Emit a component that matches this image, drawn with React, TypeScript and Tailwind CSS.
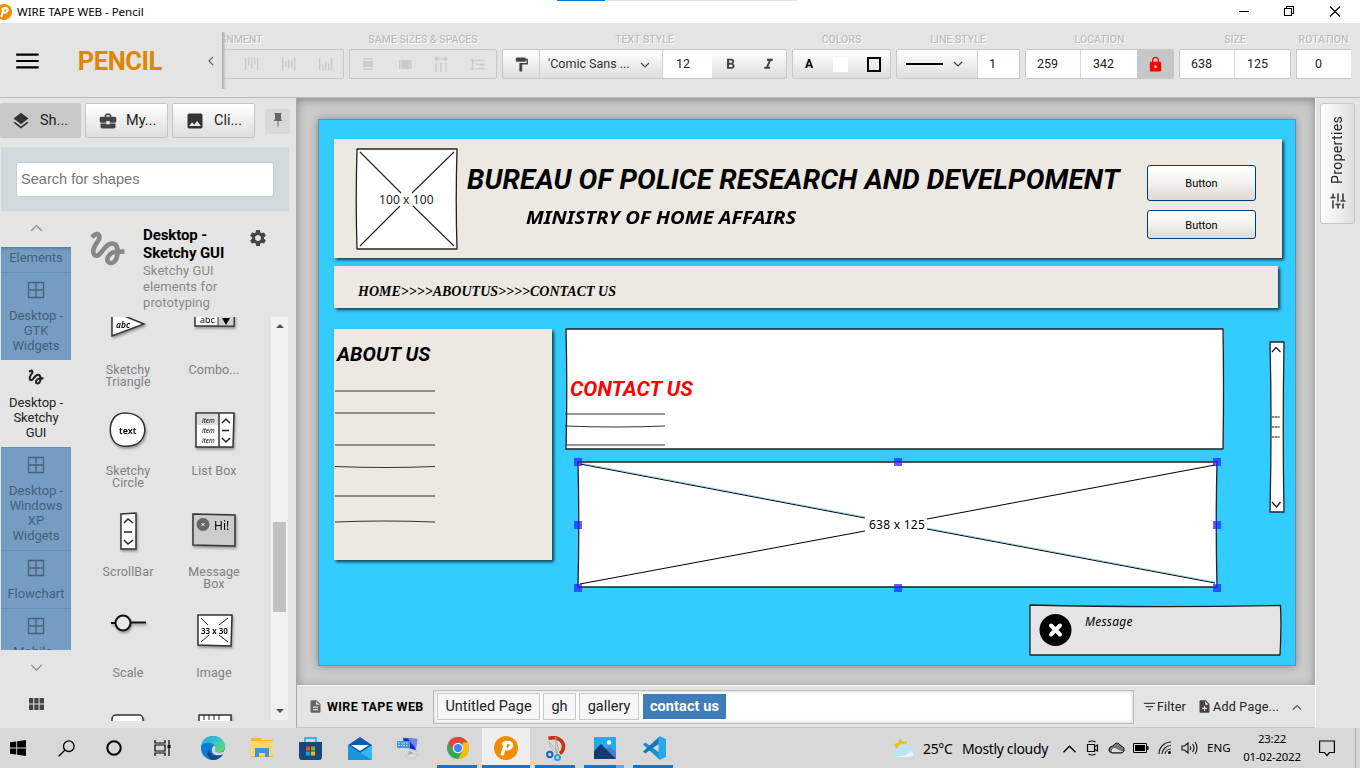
import React from "react";
import {
  MdLayers, MdBusinessCenter, MdImage, MdGesture, MdSettings, MdFormatPaint, MdFormatBold,
  MdFormatItalic, MdFormatLineSpacing, MdLock, MdDescription, MdNoteAdd, MdFilterList, MdTune,
} from "react-icons/md";

type Kids = { children?: React.ReactNode; className?: string };

function Chevron({ dir, className = "", size = 10, weight = 1.2 }: { dir: "up" | "down" | "left"; className?: string; size?: number; weight?: number }) {
  const d = dir === "up" ? "M1 7.5 5 3.5 9 7.5" : dir === "down" ? "M1 3 5 7 9 3" : "M7 1 3 5 7 9";
  return (
    <svg width={size} height={size} viewBox="0 0 10 10" className={className} fill="none" stroke="currentColor" strokeWidth={weight}>
      <path d={d} />
    </svg>
  );
}

function PencilLogo({ size }: { size: number }) {
  return (
    <svg width={size} height={size} viewBox="0 0 24 24" className="shrink-0">
      <circle cx="12" cy="12" r="12" fill="#f28c00" />
      <path d="M9.500 8c1-2.200 8-2.500 8 .8 0 3.200-3.400 4.500-6.400 3.700M11.400 8.500 8.400 18" fill="none" stroke="#fff" strokeWidth="3.400" strokeLinecap="round" strokeLinejoin="round" />
      <path d="M14.400 9.200 13.200 11.500" stroke="#f28c00" strokeWidth="1.300" strokeLinecap="round" />
    </svg>
  );
}

function TitleBar() {
  return (
    <div className="relative flex h-[23px] shrink-0 items-center bg-white">
      <div className="-ml-1 flex"><PencilLogo size={16} /></div>
      <span className="ml-[5px] whitespace-nowrap font-['Noto_Sans',sans-serif] text-[11.600px] tracking-[-0.050px] text-black">WIRE TAPE WEB - Pencil</span>
      <div className="absolute left-[557px] top-0 flex h-px w-[241px] bg-[#e3e3e3]"><div className="h-px w-12 bg-[#0078d7]" /></div>
      <svg width="110" height="20" viewBox="0 0 110 20" className="ml-auto mr-[14px]" fill="none" stroke="#000" strokeWidth="1.100">
        <path d="M3 9.500H13M48.500 6.500h7v7h-7zM50.500 6.500v-2h7v7h-2M94 4.500l10 10M104 4.500l-10 10" />
      </svg>
    </div>
  );
}

function Group({ label, className = "", box = "", children }: Kids & { label: string; box?: string }) {
  return (
    <div className={"flex shrink-0 flex-col items-center " + className}>
      <div className="h-[18px] whitespace-nowrap text-[10.500px] font-medium leading-[18px] text-[#bdbdbd] [text-shadow:1px_1px_0_#fff]">{label}</div>
      <div className={"flex h-[30px] w-full items-stretch overflow-hidden rounded-[2px] border border-[#c8c8c8] " + box}>{children}</div>
    </div>
  );
}

const grad = "bg-gradient-to-b from-white to-[#dedede]";

function Num({ children, className = "" }: Kids) {
  return <div className={"flex items-center bg-white text-[12.500px] text-[#222] " + className}>{children}</div>;
}

function BarsIcon({ mode }: { mode: "top" | "mid" | "bottom" }) {
  const bars = [13, 6, 9, 7, 13];
  return (
    <svg width="14" height="14" viewBox="0 0 14 14" fill="#cbcbcb">
      {[13, 8, 11, 7, 13].map((h, i) => {
        const v = mode === "top" ? h : bars[i];
        const y = mode === "top" ? 0.5 : mode === "bottom" ? 13.5 - v : 7 - v / 2;
        return <rect key={i} x={i * 3} y={y} width="1.400" height={v} />;
      })}
    </svg>
  );
}

function Toolbar() {
  return (
    <div className="flex h-[75px] shrink-0 items-stretch border-b border-[#bdbdbd] bg-[#e4e4e4]">
      <div className="relative z-10 mt-[9px] flex h-[57px] w-[222px] shrink-0 items-center bg-[#e4e4e4]">
        <svg width="23" height="18" viewBox="0 0 23 18" className="ml-4" stroke="#000" strokeWidth="2.200" strokeLinecap="round"><path d="M1 2.500h21M1 9h21M1 15.500h21" /></svg>
        <span className="ml-[39px] w-[129px] pt-px text-[25.500px] font-bold tracking-[-0.450px] text-[#df8600]">PENCIL</span>
        <Chevron dir="left" className="ml-auto mr-[6px] text-[#666]" />
        <div className="absolute left-full top-0 h-full w-[4px] bg-gradient-to-r from-[#aaaaaa] to-transparent" />
      </div>
      <div className="flex pt-[8px]">
        <Group label="ALIGNMENT" className="-ml-[12px] w-[134px] [&>div:first-child]:pr-[88px]" box="items-center">
          <div className="flex w-full items-center justify-end gap-[23px] pr-[10px]"><BarsIcon mode="top" /><BarsIcon mode="mid" /><BarsIcon mode="bottom" /></div>
        </Group>
        <Group label="SAME SIZES & SPACES" className="ml-[5px] w-[148px]">
          <div className="flex w-full items-center justify-between px-[10px]">
            <svg width="16" height="14" viewBox="0 0 16 14" fill="#cbcbcb"><path d="M3 1h10v1.500H3zM3 4h10v6H3zM3 11.500h10V13H3z" /></svg>
            <svg width="16" height="14" viewBox="0 0 16 14" fill="#cbcbcb"><path d="M2 3h1.500v9H2zM4.500 3h8v9h-8zM13 3h1.500v9H13z" /></svg>
            <svg width="14" height="16" viewBox="0 0 14 16" fill="none" stroke="#cbcbcb" strokeWidth="1.400"><path d="M2 7v9M7 7v9M12 7v9M1 3h12M3.500 1 1 3l2.500 2M10.500 1 13 3l-2.500 2" /></svg>
            <MdFormatLineSpacing size={17} color="#cbcbcb" />
          </div>
        </Group>
        <Group label="TEXT STYLE" className="ml-[5px] w-[285px]" box={grad}>
          <div className="flex w-[36px] items-center justify-center"><MdFormatPaint size={17} color="#444" /></div>
          <div className="flex w-[124px] items-center border-x border-[#d0d0d0] pl-[8px] pt-px text-[12.500px] text-[#333]">'Comic Sans ...<Chevron dir="down" className="ml-auto mr-[12px] text-[#444]" /></div>
          <Num className="w-[49px] pl-[13px]">12</Num>
          <div className="flex grow items-center justify-between pl-[10px] pr-[9px]"><MdFormatBold size={17} color="#444" /><MdFormatItalic size={17} color="#444" /></div>
        </Group>
        <Group label="COLORS" className="ml-[5px] w-[99px]" box={grad}>
          <div className="flex grow items-center justify-between pl-[12px] pr-[9px] text-[12px] font-bold text-black">A<span className="h-[15px] w-[15px] bg-white" /><span className="h-[15px] w-[14px] border-2 border-black" /></div>
        </Group>
        <Group label="LINE STYLE" className="ml-[5px] w-[124px]" box={grad}>
          <div className="flex w-[81px] items-center border-r border-[#d0d0d0] pl-[9px]"><span className="h-[2px] w-[37px] bg-black" /><Chevron dir="down" className="ml-[10px] text-[#444]" /></div>
          <Num className="grow pl-[11px]">1</Num>
        </Group>
        <Group label="LOCATION" className="ml-[5px] w-[149px]">
          <Num className="w-[55px] border-r border-[#d8d8d8] pl-[11px]">259</Num>
          <Num className="w-[56px] pl-[12px]">342</Num>
          <div className="flex grow items-center justify-center bg-[#c7c7c7]"><MdLock size={17} color="#ff0000" /></div>
        </Group>
        <Group label="SIZE" className="ml-[5px] w-[112px]">
          <Num className="w-[55px] border-r border-[#d8d8d8] pl-[11px]">638</Num>
          <Num className="grow pl-[12px]">125</Num>
        </Group>
        <Group label="ROTATION" className="ml-[5px] w-[55px]" box="rounded-r-none border-r-0"><Num className="w-full pl-[18px]">0</Num></Group>
      </div>
    </div>
  );
}

function Tab({ children, className = "" }: Kids) {
  return <div className={"flex h-[35px] items-center rounded-[2px] text-[14.500px] text-[#222] " + className}>{children}</div>;
}

function WindowIcon() {
  return (
    <svg width="18" height="18" viewBox="0 0 18 18" fill="none" stroke="#47617c" strokeWidth="1.300"><path d="M1.500 1.500h15v15h-15zM9 1.500v15M1.500 9h15" /></svg>
  );
}

function Category({ lines, active = false }: { lines: string[]; active?: boolean }) {
  return (
    <div className={"flex shrink-0 flex-col items-center px-0 pb-[7px] pt-[8px] text-[13px] leading-[15px] tracking-[-0.050px] " + (active ? "bg-[#e4e4e4] text-[#222]" : "border-t border-[#6790b5] text-[#435f7c]")}>
      {active ? <MdGesture size={20} className="-my-px" /> : <WindowIcon />}
      <div className="mt-[9px] text-center">{lines.map((l) => <div key={l} className="whitespace-nowrap">{l}</div>)}</div>
    </div>
  );
}

const comic = "'Noto Sans', sans-serif";
const sk = { fill: "#fff", stroke: "#333", strokeWidth: 1.5 };

function Thumb({ kind }: { kind: string }) {
  return (
    <svg width="50" height="42" viewBox="0 0 50 42" className="drop-shadow-[1px_2px_1px_#999]" fontFamily={comic}>
      {kind === "triangle" && <g><path d="M9 2 41 15 9 27z" {...sk} /><text x="13" y="19" fontSize="8.500" fontStyle="italic" fontWeight="600">abc</text></g>}
      {kind === "combo" && <g><rect x="6" y="2" width="39" height="15" {...sk} /><path d="M29 2h16v15H29z" fill="#d0d0d0" stroke="#333" /><path d="m33 9 8 0-4 7z" /><text x="11" y="13.500" fontSize="9">abc</text></g>}
      {kind === "circle" && <g><path d="M15 4.500C21 1.500 32 3 38 9c6 8 5 19-4 25-9 4-20 3-24-4C5 21 7 9 15 4.500z" {...sk} /><text x="16" y="24" fontSize="9" fontWeight="600">text</text></g>}
      {kind === "list" && <g><path d="m7 3 38 0-1 34-37 0z" {...sk} /><path d="M8 4h22v11H8z" fill="#ddd" /><path d="M30 3v34" stroke="#333" strokeWidth="1.500" /><g fontSize="6.500" fontStyle="italic"><text x="13" y="12.500">item</text><text x="13" y="22.500">item</text><text x="13" y="32.500">item</text></g><path d="m33 13 4-4 4 4M33 20.500h7M33 28l4 4 4-4" fill="none" stroke="#222" strokeWidth="1.500" /></g>}
      {kind === "scroll" && <g><path d="m18 3 15-1 0 36-15 0z" {...sk} /><path d="m21 12 4-4 5 4M21 21h8M21 29l4 4 5-4" fill="none" stroke="#222" strokeWidth="1.400" /></g>}
      {kind === "message" && <g><path d="m4 3 42 1 0 31-42-1z" fill="#ccc" stroke="#333" strokeWidth="1.500" /><circle cx="14" cy="13.500" r="6.500" fill="#666" /><path d="m12.500 12 3 3m0-3-3 3" stroke="#fff" /><text x="25" y="19" fontSize="12">Hi!</text></g>}
      {kind === "scale" && <g fill="none" stroke="#111" strokeWidth="2"><path d="M8 11h5M28 10.500h15" /><circle cx="20" cy="11" r="7.500" fill="#e9e9e9" /></g>}
      {kind === "image" && <g><path d="m9 3 34 0-1 31-33-1z" {...sk} /><path d="m12 6 7 7m20-7-9 7M12 30l8-7m19 7-9-7" stroke="#222" /><text x="12" y="21.500" fontSize="8" fontWeight="600">33 x 30</text></g>}
      {kind === "round" && <rect x="9" y="2" width="31" height="30" rx="4" {...sk} />}
      {kind === "calendar" && <g><rect x="10" y="2" width="32" height="30" {...sk} /><path d="M15 2v5m5-5v5m5-5v5m5-5v5" stroke="#222" /></g>}
    </svg>
  );
}

function Shape({ kind, lines }: { kind: string; lines: string[] }) {
  return (
    <div className="flex h-[101px] w-[86px] flex-col items-center">
      <Thumb kind={kind} />
      <div className="mt-[13px] whitespace-nowrap text-center text-[12.500px] leading-[12px] tracking-[0.100px] text-[#808080]">{lines.map((l) => <div key={l}>{l}</div>)}</div>
    </div>
  );
}

function Sidebar() {
  return (
    <div className="flex w-[297px] shrink-0 flex-col border-r border-[#aaa] bg-[#e4e4e4]">
      <div className="flex pt-[5px]">
        <Tab className="w-[81px] bg-[#c8c8c8] pl-[11px]"><MdLayers size={20} color="#333" /><span className="ml-[9px] pt-px">Sh...</span></Tab>
        <Tab className={"ml-1 w-[83px] border border-[#c5c5c5] pl-[12px] " + grad}><MdBusinessCenter size={20} color="#444" /><span className="ml-[8px] pt-px">My...</span></Tab>
        <Tab className={"ml-1 w-[83px] border border-[#c5c5c5] pl-[12px] " + grad}><MdImage size={20} color="#333" /><span className="ml-[9px] pt-px">Cli...</span></Tab>
        <div className="ml-[10px] mt-[6px] flex h-[25px] w-[25px] items-center justify-center rounded-[2px] bg-[#d8d8d8]">
          <svg width="10" height="14" viewBox="0 0 10 14" fill="#666" className="-mt-[3px]"><path d="M1.500 0h7v1H8v5l1.500 2H5.500v5.500h-1V8h-4L2 6V1h-.5z" /></svg>
        </div>
      </div>
      <div className="ml-px mt-[9px] flex h-[64px] w-[288px] items-center bg-[#d1d9dc] pl-[15px]">
        <div className="flex h-[35px] w-[258px] items-center rounded-[3px] border border-[#c6cccf] bg-white pl-[4px] pt-px font-['Liberation_Sans',sans-serif] text-[14.600px] text-[#757575]">Search for shapes</div>
      </div>
      <div className="flex min-h-0 grow">
        <div className="flex w-[72px] shrink-0 flex-col items-center">
          <div className="flex h-[36px] w-full items-center justify-center"><Chevron dir="up" size={13} weight={1} className="-mt-[3px] text-[#888]" /></div>
          <div className="ml-px flex h-[403px] w-[70px] flex-col self-start overflow-hidden bg-[#759dc2] shadow-[inset_0_4px_4px_-3px_#4c6f92]">
            <div className="h-[25px] shrink-0 pt-[3px] text-center text-[13px] leading-[15px] tracking-[-0.050px] text-[#435f7c]">Elements</div>
            <Category lines={["Desktop -", "GTK", "Widgets"]} />
            <Category active lines={["Desktop -", "Sketchy", "GUI"]} />
            <Category lines={["Desktop -", "Windows", "XP", "Widgets"]} />
            <Category lines={["Flowchart"]} />
            <Category lines={["Mobile -"]} />
          </div>
          <div className="flex h-[34px] items-center"><Chevron dir="down" size={13} weight={1} className="text-[#888]" /></div>
          <svg width="15" height="12" viewBox="0 0 15 12" className="ml-px mt-[14px]" fill="#444"><path d="M0 0h4.300v5.500H0zM5.300 0h4.300v5.500H5.300zM10.600 0H15v5.500h-4.400zM0 6.500h4.300V12H0zM5.300 6.500h4.300V12H5.300zM10.600 6.500H15V12h-4.400z" /></svg>
        </div>
        <div className="flex w-[217px] shrink-0 flex-col">
          <div className="flex h-[106px] shrink-0 items-start pl-[13px]">
            <MdGesture size={45} color="#888" className="mt-[15px]" />
            <div className="ml-[13px] mt-[15px] w-[100px] whitespace-nowrap text-[#888]">
              <div className="text-[15px] font-bold leading-[18px] tracking-[-0.100px] text-black">Desktop -<br />Sketchy GUI</div>
              <div className="mt-px text-[13px] leading-[16px] tracking-[0.100px]">Sketchy GUI<br />elements for<br />prototyping</div>
            </div>
            <MdSettings size={20} color="#444" className="ml-[5px] mt-[17px]" />
          </div>
          <div className="flex h-[404px]">
            <div className="flex w-[199px] justify-start overflow-hidden pl-[13px]">
              <div className="-mt-[8px] grid h-[520px] grid-cols-[86px_86px] content-start">
                <Shape kind="triangle" lines={["Sketchy", "Triangle"]} />
                <Shape kind="combo" lines={["Combo..."]} />
                <Shape kind="circle" lines={["Sketchy", "Circle"]} />
                <Shape kind="list" lines={["List Box"]} />
                <Shape kind="scroll" lines={["ScrollBar"]} />
                <Shape kind="message" lines={["Message", "Box"]} />
                <Shape kind="scale" lines={["Scale"]} />
                <Shape kind="image" lines={["Image"]} />
                <Shape kind="round" lines={[]} />
                <Shape kind="calendar" lines={[]} />
              </div>
            </div>
            <div className="flex h-[403px] w-[17px] flex-col items-center justify-between bg-[#f1f1f1]">
              <svg width="8" height="18" viewBox="0 0 8 18" fill="#505050"><path d="m0 11 4-4 4 4z" /></svg>
              <div className="mt-[187px] h-[90px] w-[13px] bg-[#c1c1c1]" />
              <svg width="8" height="18" viewBox="0 0 8 18" fill="#505050" className="mt-auto"><path d="m0 7 4 4 4-4z" /></svg>
            </div>
          </div>
        </div>
      </div>
    </div>
  );
}

const handles = [[578, 462], [898, 462], [1217, 462], [578, 525], [1217, 525], [578, 588], [898, 588], [1217, 588]];
const panelShadow = "bg-[#ece9e2] shadow-[2px_2px_3px_rgba(0,0,0,0.700)]";

function Board() {
  return (
    <div className="absolute left-[21px] top-[21px] h-[547px] w-[978px] whitespace-nowrap border border-[#628fb3] bg-[#33ccff] shadow-[0_0_8px_#888]">
      <div className={"absolute left-[15px] top-[19px] h-[119px] w-[948px] " + panelShadow} />
      <div className={"absolute left-[15px] top-[146px] h-[42px] w-[944px] " + panelShadow} />
      <div className={"absolute left-[15px] top-[209px] h-[231px] w-[218px] " + panelShadow} />
      <svg className="absolute left-0 top-0" width="976" height="545" viewBox="319 120 976 545" fill="#fff" stroke="#222" strokeWidth="1.300" strokeLinejoin="round">
        <path d="M357 149H457Q455.500 200 457 249H357Q355.500 200 357 149Z" />
        <path d="m360 152 41 41m53-41-42 41M360 246l40-40m54 40-41-40" strokeWidth="1.100" />
        <path d="M566 329H1223Q1224 390 1223 449H566Q567.500 390 566 329Z" />
        <path d="M578 462H1217Q1215.500 525 1217 587Q900 586 578 587Q579.500 525 578 462Z" />
        <path d="m580 464 285 54M927 529l288 54M580 584 865 531M927 519l288-54" strokeWidth="1" stroke="#000" />
        <path d="m580 463 285 54M927 528l288 54" stroke="#21abd5" strokeWidth=".5" />
        <path d="M1270 342h14q-1.500 90 0 170h-14q2-90 0-170z" />
        <path d="m1272 352 4-4.500 4.500 4.500M1272 502l4.500 5 4-5" fill="none" />
        <path d="M1272 417h8M1272 427h8M1272 437h8" stroke="#666" strokeWidth="1.500" strokeDasharray="2.300 .4" />
        <path d="M1030 605Q1150 608 1280.500 605.500Q1281.500 630 1280 655H1030Z" fill="#e4e4e4" />
        <circle cx="1055.500" cy="630" r="16" fill="#000" stroke="none" />
        <path d="m1051 625.500 9 9m0-9-9 9" stroke="#fff" strokeWidth="4" strokeLinecap="round" />
        <g fill="none" stroke="#333" strokeWidth="1.200">
          <path d="M335 391h100M335 413h100M335 445h100M335 466.500Q385 468.500 435 466.500M335 496h100M335 522Q385 520 435 522" />
          <path d="M565 414h100M565 426Q615 428 665 426M565 445h100" />
        </g>
        <g fill="#1f1fff" fillOpacity=".7" stroke="none">
          {handles.map(([x, y]) => <rect key={x + "-" + y} x={x - 4} y={y - 4} width="8" height="8" />)}
        </g>
      </svg>
      <div className="absolute left-[60px] top-[71px] font-['Noto_Sans',sans-serif] text-[12px] leading-[18px] tracking-[0.100px] text-[#222]">100 x 100</div>
      <div className="absolute left-[148px] top-[42px] text-[28px] font-bold italic leading-[36px] tracking-[0.120px]">BUREAU OF POLICE RESEARCH AND DEVELPOMENT</div>
      <div className="absolute left-[207px] top-[86px] origin-left scale-x-[1.122] font-['Noto_Sans',sans-serif] text-[18px] font-bold italic leading-[22px]">MINISTRY OF HOME AFFAIRS</div>
      <div className="absolute left-[39px] top-[163px] font-['Liberation_Serif',serif] text-[14px] font-bold italic leading-[18px]">HOME&gt;&gt;&gt;&gt;ABOUTUS&gt;&gt;&gt;&gt;CONTACT US</div>
      <div className="absolute left-[18px] top-[222px] text-[20px] font-bold italic leading-[24px] tracking-[0.080px]">ABOUT US</div>
      <div className="absolute left-[251px] top-[257px] text-[21px] font-bold italic leading-[24px] text-[#ff0000]">CONTACT US</div>
      <div className="absolute left-[550px] top-[396px] font-['Noto_Sans',sans-serif] text-[12px] leading-[18px] tracking-[0.250px]">638 x 125</div>
      <div className="absolute left-[766px] top-[493px] font-['Noto_Sans',sans-serif] text-[12px] italic leading-[18px] tracking-[0.200px]">Message</div>
      <div className="absolute left-[828px] top-[45px] flex h-[36px] w-[109px] items-center justify-center rounded-[3px] border border-[#003c74] bg-gradient-to-b from-white via-[#f2f1ed] to-[#dedad1] pt-[3px] text-[11px]">Button</div>
      <div className="absolute left-[828px] top-[90px] flex h-[29px] w-[109px] items-center justify-center rounded-[3px] border border-[#003c74] bg-gradient-to-b from-white via-[#f2f1ed] to-[#dedad1] pt-[3px] text-[11px]">Button</div>
    </div>
  );
}

function PageTab({ children, className = "" }: Kids) {
  return <div className={"flex h-[27px] items-center justify-center border border-[#c8c8c8] bg-[#f6f6f6] text-[14.500px] text-[#222] " + className}>{children}</div>;
}

function Workspace() {
  return (
    <div className="flex w-[1018px] shrink-0 flex-col">
      <div className="relative h-[587px] overflow-hidden bg-[#cbcbcb] shadow-[inset_0_2px_10px_#888]"><Board /></div>
      <div className="flex h-[43px] items-center border-b border-t border-b-[#c8c8c8] border-t-[#f3f3f3] bg-[#e4e4e4]">
        <MdDescription size={15} color="#666" className="ml-[11px]" />
        <span className="ml-[4px] w-[106px] shrink-0 whitespace-nowrap pt-px text-[12.500px] font-bold tracking-[0.350px] text-black">WIRE TAPE WEB</span>
        <div className="flex h-[34px] w-[701px] shrink-0 items-center gap-[3px] border border-[#bbb] bg-white pl-[3px] shadow-[inset_0_0_4px_#ccc]">
          <PageTab className="w-[103px]">Untitled Page</PageTab>
          <PageTab className="w-[33px]">gh</PageTab>
          <PageTab className="w-[60px]">gallery</PageTab>
          <div className="ml-px flex h-[25px] w-[83px] items-center justify-center bg-[#3f7db7] text-[14.500px] font-bold tracking-[0.100px] text-white">contact us</div>
        </div>
        <MdFilterList size={15} color="#444" className="ml-[8px]" />
        <span className="w-[40px] pt-px text-[12.500px] tracking-[0.150px] text-[#222]">Filter</span>
        <MdNoteAdd size={15} color="#444" />
        <span className="w-[80px] whitespace-nowrap pl-px pt-px text-[12.500px] tracking-[0.250px] text-[#222]">Add Page...</span>
        <Chevron dir="up" className="text-[#555]" />
      </div>
    </div>
  );
}

function RightPanel() {
  return (
    <div className="grow border-l border-l-[#f5f5f5] bg-[#e4e4e4] pl-[4px] pt-[5px]">
      <div className="flex h-[121px] w-[35px] flex-col items-center justify-end rounded-[3px] border border-[#c8c8c8] bg-gradient-to-r from-white to-[#dedede] pb-[12px]">
        <span className="rotate-180 text-[14px] tracking-[0.350px] text-[#222] [writing-mode:vertical-rl]">Properties</span>
        <MdTune size={20} color="#444" className="mt-[7px] -rotate-90" />
      </div>
    </div>
  );
}

function Cell({ children, className = "", width = "w-[49px]", bar = "" }: Kids & { width?: string; bar?: string }) {
  return (
    <div className={"relative flex h-10 shrink-0 items-center justify-center " + width + " " + className}>
      {children}
      {bar && <div className={"absolute bottom-0 h-[3px] bg-[#0078d7] " + bar} />}
    </div>
  );
}

function Taskbar() {
  return (
    <div className="flex h-10 shrink-0 items-center bg-[#d8d8d8] font-['Noto_Sans',sans-serif] text-black">
      <Cell className="mr-[6px]" width="w-[36px]"><svg width="16" height="16" viewBox="0 0 16 16"><path d="M0 2.300 6.300 1.400V7.500H0zM7.200 1.300 16 0V7.500H7.200zM0 8.500H6.300V14.600L0 13.700zM7.200 8.500H16V16L7.200 14.700z" /></svg></Cell>
      <Cell><svg width="17" height="17" viewBox="0 0 17 17" fill="none" stroke="#000" strokeWidth="1.300"><circle cx="10.800" cy="6.200" r="5.300" /><path d="M7 10 .7 16.300" /></svg></Cell>
      <Cell width="w-[45px]"><svg width="16" height="16" viewBox="0 0 16 16" fill="none" stroke="#000" strokeWidth="2"><circle cx="8" cy="8" r="6.700" /></svg></Cell>
      <Cell width="w-[52px]"><svg width="17" height="16" viewBox="0 0 17 16" fill="none" stroke="#000" strokeWidth="1.200"><path d="M1 0v3h10V0M1 5h10v6H1zM1 16v-3h10v3M15 0v5M15 8v8" /><path d="M13.500 5h3v3h-3z" fill="#000" stroke="none" /></svg></Cell>
      <Cell>
        <svg width="24" height="24" viewBox="0 0 24 24">
          <defs><linearGradient id="edgeTop" x1="0" y1="0" x2="1" y2="1"><stop offset="0" stopColor="#1aa5e3" /><stop offset=".5" stopColor="#38c6c3" /><stop offset="1" stopColor="#6be34b" /></linearGradient></defs>
          <circle cx="12" cy="12" r="12" fill="#0f7cd3" />
          <path d="M0 10C1.500 3.500 6 0 12 0c7 0 12 5 12 10.500 0 5-6 7-9.500 5-1.500-1 0-1.500 0-4C14 7 4 4.500 0 10z" fill="url(#edgeTop)" />
          <path d="M8.500 13c-.7 5 5 8.500 13 5-1.500 3.500-5 6-9 6-6 0-8-8-4-11z" fill="#114a8b" />
          <path d="M13 9.500c3 1.500 0 4.500 1.500 6 2 1.500 5.500 1.500 8 0L24 13v4l-1.500 1c-3 1.500-5 1.500-8 1-4-1.500-5-6-1.500-9.500z" fill="#d8d8d8" />
        </svg>
      </Cell>
      <Cell><svg width="22" height="20" viewBox="0 0 22 20"><path d="M0 0h9l2 2h11v17H0z" fill="#f5b820" /><path d="M0 3h22v15H0z" fill="#ffd766" /><path d="M4 10h14v9h-4v-4H8v4H4z" fill="#3f93da" /></svg></Cell>
      <Cell><svg width="23" height="23" viewBox="0 0 23 23"><path d="M6 6V1h11v5" fill="none" stroke="#31b5e8" strokeWidth="1.800" /><path d="M0 5h23v15q0 3-3 3H3q-3 0-3-3z" fill="#17477f" /><path d="M7 9.500h4v4H7z" fill="#f25022" /><path d="M12 9.500h4v4h-4z" fill="#7fba00" /><path d="M7 14.500h4v4H7z" fill="#00a4ef" /><path d="M12 14.500h4v4h-4z" fill="#ffb900" /></svg></Cell>
      <Cell><svg width="24" height="23" viewBox="0 0 24 23"><path d="M0 8 12 0l12 8v14H0z" fill="#0b5cab" /><path d="M0 8v15h24V8l-12 8z" fill="#38b6ee" /><path d="m0 8 24 15H0z" fill="#1b94dc" /><path d="M3 8h18l-9 6z" fill="#f4f4f4" /></svg></Cell>
      <Cell><svg width="24" height="24" viewBox="0 0 24 24"><path d="m5 1 17 1-2 14-13-4z" fill="#c6cbd5" /><path d="m6 2 14 1-1.500 11L8 11z" fill="#1c24c0" /><path d="m11 3 9 0-1 10z" fill="#6e83ef" /><path d="M0 5h13v7H0z" fill="#4796dd" /><path d="M1.500 7h10M1.500 9.500h10" stroke="#d6efff" strokeDasharray="1.500 1" /><path d="m12 15 3 1 0 3-4 0z" fill="#aaa" /><path d="M8 20q7-4 14-1-7 6-14 1" fill="#ddd" stroke="#aaa" strokeWidth=".5" /></svg></Cell>
      <Cell bar="left-[4px] w-10"><svg width="22" height="22" viewBox="0 0 24 24"><circle cx="12" cy="12" r="12" fill="#34a853" /><path d="M1.600 6A12 12 0 0 1 22.400 6H12l-5 9z" fill="#ea4335" /><path d="M22.400 6A12 12 0 0 1 12 24l5.200-9V6z" fill="#fbbc05" /><circle cx="12" cy="12" r="5.700" fill="#fff" /><circle cx="12" cy="12" r="4.500" fill="#4285f4" /></svg></Cell>
      <Cell className="bg-[#eeeeee]" width="w-[48px]" bar="left-0 w-12"><PencilLogo size={24} /></Cell>
      <Cell className="ml-px" bar="left-[4px] w-10">
        <svg width="20" height="25" viewBox="0 0 20 25" fill="none">
          <path d="M2.500 2.500C10 0 17.500 4 17.500 10.500c0 3-1.500 5.500-3.500 7" stroke="#c93513" strokeWidth="3.600" />
          <path d="M9.500 1 12.500 14 10 17zM3 6l9 10-1 2-6-6z" fill="#d9d9d9" stroke="#a2a2a2" strokeWidth=".7" />
          <circle cx="3.800" cy="18.500" r="2.700" stroke="#1468bb" strokeWidth="2" />
          <circle cx="11.500" cy="21.500" r="2.500" stroke="#2b9de3" strokeWidth="2" />
        </svg>
      </Cell>
      <Cell bar="left-[4px] w-8"><svg width="22" height="22" viewBox="0 0 22 22"><path d="M0 0h22v22H0z" fill="#29a8ed" /><path d="m10 14 5-5 7 6v7H10z" fill="#5379d6" /><path d="m0 14 7-7 15 15H0z" fill="#163b72" /><circle cx="15" cy="5.500" r="2.200" fill="#fff" /></svg><div className="absolute bottom-0 left-[36px] h-[3px] w-2 bg-[#65a8e0]" /></Cell>
      <Cell bar="left-[4px] w-10">
        <svg width="24" height="24" viewBox="0 0 24 24">
          <path d="M3.200 6.500 1 8.500 17 23l1-6z" fill="#168fd1" />
          <path d="M17 1 1 15.500l2.200 2L18 7z" fill="#1277bd" />
          <path d="m17.500 0 6.500 3v18l-6.500 3-1-1.500V1.500z" fill="#2ba7ec" />
        </svg>
      </Cell>
      <div className="ml-auto flex shrink-0 items-center">
        <svg width="24" height="20" viewBox="0 0 24 20"><path d="m2 6 4-1 2-4 3 3 4-1-1 8H4z" fill="#f8bd0b" /><path d="M4 19a4.500 4.500 0 0 1 1-8.500C7 5 14 4 17 9c7 0 7 10 0 10z" fill="#bce3fa" /><path d="M4 18q10 1 15-5 6 6-3 6H5z" fill="#e7f6ff" /></svg>
        <span className="ml-[7px] w-[38px] pt-px text-[14px] tracking-[-0.350px]">25°C</span>
        <span className="w-[95px] whitespace-nowrap pl-px pt-px text-[14px] tracking-[-0.350px]">Mostly cloudy</span>
        <div className="flex w-[142px] items-center justify-between pl-[6px]">
          <Chevron dir="up" size={15} weight={0.9} />
          <svg width="13" height="16" viewBox="0 0 13 16" fill="none" stroke="#111" strokeWidth="1.200"><path d="M2.500 2Q6 0 9.500 2M2.500 14Q6 16 9.500 14M1.500 4.500h7v7h-7zM8.500 7 11.500 5v6l-3-2" /></svg>
          <svg width="17" height="12" viewBox="0 0 17 12"><path d="M4 11Q0 10 1 7q1-3 4-3 4-6 8 0 4 1 3 5-1 2-3 2z" fill="#777" stroke="#111" /><path d="M4 10Q3 6 7 6l8 4z" fill="#ddd" /></svg>
          <svg width="16" height="10" viewBox="0 0 16 10"><path d="M.5.500h13v9H.5z" fill="none" stroke="#000" /><path d="M2 2h10v6H2zM14 3h1.500v4H14z" /></svg>
          <svg width="14" height="14" viewBox="0 0 14 14" fill="none" stroke="#222" strokeWidth="1.200"><path d="M1 13A12 12 0 0 1 13 1M4 13A9 9 0 0 1 13 4.500M7 13A6 6 0 0 1 13 8" /><circle cx="11.500" cy="11.500" r="1.500" fill="#000" stroke="none" /></svg>
          <svg width="17" height="14" viewBox="0 0 17 14" fill="none" stroke="#111" strokeWidth="1.100"><path d="M1 5h2.500L7 2v10L3.500 9H1zM9 5q1.500 2 0 4M11.500 3q3 4 0 8M14 1q4 6 0 12" /></svg>
        </div>
        <span className="ml-[9px] w-[35px] text-[11.500px]">ENG</span>
        <div className="w-[60px] whitespace-nowrap text-center text-[11.400px] leading-[18px] tracking-[-0.200px]">23:22<br />01-02-2022</div>
        <svg width="16" height="17" viewBox="0 0 16 17" className="ml-[17px]" fill="none" stroke="#000" strokeWidth="1.200"><path d="M.6 1h14.800v11.500H10.500L8 15.500l-2.500-3H.6z" /></svg>
        <div className="ml-[20px] mr-[4px] h-10 w-px bg-[#aaa]" />
      </div>
    </div>
  );
}

export default function App() {
  return (
    <div className="flex h-[768px] w-[1360px] flex-col overflow-hidden bg-[#e4e4e4] font-['Roboto',sans-serif]">
      <TitleBar />
      <Toolbar />
      <div className="flex h-[630px] shrink-0">
        <Sidebar />
        <Workspace />
        <RightPanel />
      </div>
      <Taskbar />
    </div>
  );
}
